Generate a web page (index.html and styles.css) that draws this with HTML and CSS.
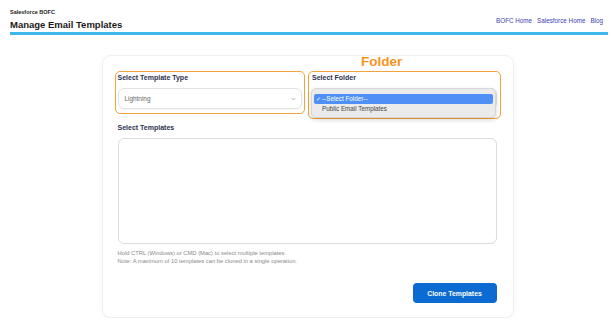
FILE: index.html
```html
<!DOCTYPE html>
<html>
	<head>
		<meta charset="utf-8">
		<title>Manage Email Templates</title>
		<link rel="stylesheet" href="styles.css">
	</head>
	<body>
		<div class="header">
			<div class="top">
				<div class="brand">
					<div class="brand-sub">Salesforce BOFC</div>
					<h1 class="brand-title">Manage Email Templates</h1>
				</div>
				<ul class="links">
					<li><a href="#">BOFC Home</a></li>
					<li><a href="#">Salesforce Home</a></li>
					<li><a href="#">Blog</a></li>
				</ul>
			</div>
			<div class="bar"></div>
		</div>

		<div class="card">
			<div class="fields">
				<div class="field field-type">
					<label class="label">Select Template Type</label>
					<div class="select">
						<span>Lightning</span>
						<svg class="chevron" width="5" height="4" viewBox="0 0 5 4"><path d="M0.6 1 L2.5 3 L4.4 1" fill="none" stroke="#9a9a9a" stroke-width="0.7"/></svg>
					</div>
				</div>
				<div class="field field-folder">
					<div class="annot">Folder</div>
					<label class="label">Select Folder</label>
					<div class="select"></div>
					<ul class="popup">
						<li class="option active"><span class="check">✓</span>--Select Folder--</li>
						<li class="option">Public Email Templates</li>
					</ul>
				</div>
			</div>

			<label class="label label-templates">Select Templates</label>
			<div class="textarea"></div>

			<p class="help">Hold CTRL (Windows) or CMD (Mac) to select multiple templates.<br>Note: A maximum of 10 templates can be cloned in a single operation.</p>

			<div class="actions">
				<button class="btn">Clone Templates</button>
			</div>
		</div>
	</body>
</html>
```

FILE: styles.css
```css
* {
	margin: 0;
	padding: 0;
	box-sizing: border-box;
}
ul {
	list-style: none;
}
body {
	background: #fff;
	font-family: "Liberation Sans", Arial, sans-serif;
	color: #222;
}
.header {
	padding: 9px 7px 0 10px;
}
.header .top {
	display: flex;
	justify-content: space-between;
	align-items: flex-end;
}
.brand-sub {
	font-size: 5.5px;
	line-height: 6px;
	font-weight: bold;
	color: #222;
	margin-bottom: 4px;
}
.brand-title {
	font-size: 9.5px;
	line-height: 11px;
	font-weight: bold;
	color: #1a1a1a;
}
.links {
	display: flex;
	gap: 5px;
	margin: 0 5px 3px 0;
}
.links a {
	font-size: 6.3px;
	line-height: 8px;
	color: #3d3db5;
	text-decoration: none;
}
.bar {
	height: 3px;
	margin-top: 2px;
	background: #3fb6ec;
}
.card {
	width: 412px;
	margin: 20px auto 0;
	padding: 17px 16px 14px 15px;
	border: 1px solid #efefef;
	border-radius: 9px;
	box-shadow: 0 1px 4px rgba(0, 0, 0, 0.05);
}
.fields {
	display: grid;
	grid-template-columns: 1fr 1fr;
	gap: 10px;
	align-items: start;
}
.field {
	position: relative;
	border: 1px solid #f4a33c;
	border-radius: 5px;
}
.field-type {
	padding: 1px 2px 4px;
	margin: -2px -3px -5px;
}
.field-folder {
	padding: 1px 3px 9px;
	margin: -2px -4px -10px;
}
.label {
	display: block;
	font-size: 7px;
	line-height: 9px;
	font-weight: bold;
	color: #2c3150;
	margin-bottom: 6px;
}
.select {
	height: 21px;
	border: 1px solid #e2e2e2;
	border-radius: 6px;
	box-shadow: 0 1px 2px rgba(0, 0, 0, 0.04);
	display: flex;
	align-items: center;
	justify-content: space-between;
	padding: 0 5px 0 6px;
	font-size: 6.4px;
	color: #666;
}
.annot {
	position: absolute;
	top: -17px;
	left: 52px;
	font-size: 13.5px;
	line-height: 14px;
	font-weight: bold;
	color: #f7941d;
}
.popup {
	position: absolute;
	top: 16px;
	left: 2px;
	width: 185px;
	padding: 5px 2px 3px;
	background: #ebebeb;
	border: 1px solid #d6d6d6;
	border-radius: 5px;
	box-shadow: 0 2px 5px rgba(0, 0, 0, 0.15);
}
.option {
	height: 10px;
	line-height: 10px;
	font-size: 6.3px;
	color: #444;
	padding-left: 8px;
	border-radius: 2px;
}
.option.active {
	background: #4f90f6;
	color: #fff;
	padding-left: 2px;
}
.check {
	display: inline-block;
	width: 6px;
}
.label-templates {
	margin-top: 14px;
}
.textarea {
	height: 106px;
	border: 1px solid #dcdcdc;
	border-radius: 6px;
}
.help {
	margin-top: 5px;
	font-size: 5.8px;
	line-height: 8px;
	color: #8a8a8a;
}
.actions {
	display: flex;
	justify-content: flex-end;
	margin-top: 18px;
}
.btn {
	width: 84px;
	height: 20px;
	border: none;
	border-radius: 4px;
	background: #0b6bd2;
	color: #fff;
	font-family: "Liberation Sans", Arial, sans-serif;
	font-size: 6.9px;
	font-weight: bold;
}
```
